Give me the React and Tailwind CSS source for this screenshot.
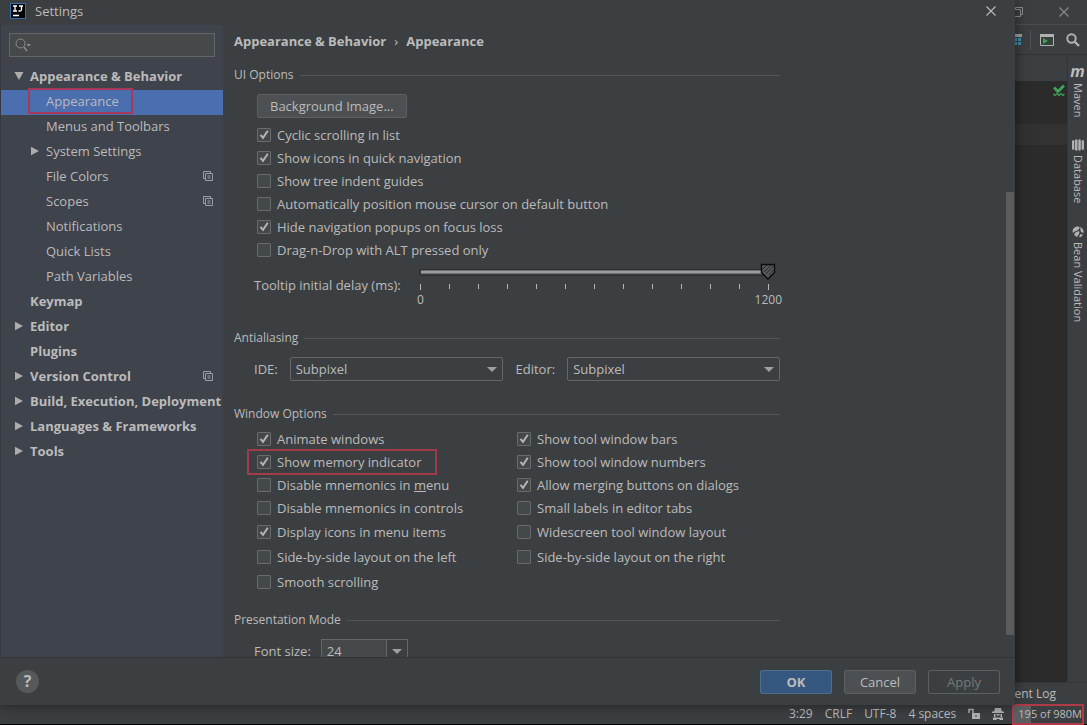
import React, { useState } from 'react';

const TREE = [
  { label: 'Appearance & Behavior', level: 0, arrow: 'down' },
  { label: 'Appearance', level: 1, selected: true },
  { label: 'Menus and Toolbars', level: 1 },
  { label: 'System Settings', level: 1, arrow: 'right' },
  { label: 'File Colors', level: 1, project: true },
  { label: 'Scopes', level: 1, project: true },
  { label: 'Notifications', level: 1 },
  { label: 'Quick Lists', level: 1 },
  { label: 'Path Variables', level: 1 },
  { label: 'Keymap', level: 0 },
  { label: 'Editor', level: 0, arrow: 'right' },
  { label: 'Plugins', level: 0 },
  { label: 'Version Control', level: 0, arrow: 'right', project: true },
  { label: 'Build, Execution, Deployment', level: 0, arrow: 'right' },
  { label: 'Languages & Frameworks', level: 0, arrow: 'right' },
  { label: 'Tools', level: 0, arrow: 'right' },
];

const UI_OPTIONS = [
  { label: 'Cyclic scrolling in list', on: true },
  { label: 'Show icons in quick navigation', on: true },
  { label: 'Show tree indent guides' },
  { label: 'Automatically position mouse cursor on default button' },
  { label: 'Hide navigation popups on focus loss', on: true },
  { label: 'Drag-n-Drop with ALT pressed only' },
];

const WINDOW_LEFT = [
  { label: 'Animate windows', on: true },
  { label: 'Show memory indicator', on: true, marked: true },
  { label: <>Disable mnemonics in <u>m</u>enu</> },
  { label: 'Disable mnemonics in controls' },
  { label: 'Display icons in menu items', on: true },
  { label: 'Side-by-side layout on the left' },
  { label: 'Smooth scrolling' },
];

const WINDOW_RIGHT = [
  { label: 'Show tool window bars', on: true },
  { label: 'Show tool window numbers', on: true },
  { label: 'Allow merging buttons on dialogs', on: true },
  { label: 'Small labels in editor tabs' },
  { label: 'Widescreen tool window layout' },
  { label: 'Side-by-side layout on the right' },
];

const TICKS = Array.from({ length: 13 }, (_, i) => i);

function Arrow({ dir }) {
  return (
    <svg className="w-2.5 h-2.5 shrink-0" viewBox="0 0 10 10" fill="#adadad" aria-hidden="true">
      {dir === 'down' ? <path d="M0.5 1h9L5 9z" /> : <path d="M1 0.8v8.4L9 5z" />}
    </svg>
  );
}

function ProjectIcon() {
  return (
    <svg className="w-[10px] h-[10px] shrink-0" viewBox="0 0 10 10" fill="none" stroke="#9a9da1" aria-hidden="true">
      <path d="M2.5 7.5h-2v-7h7v2" />
      <path d="M2.5 2.5h7v7h-7z" />
      <path d="M4.5 5h3M4.5 7h3" />
    </svg>
  );
}

function CloseIcon({ className }) {
  return (
    <svg className={`w-2.5 h-2.5 ${className}`} viewBox="0 0 10 10" fill="none" stroke="currentColor" strokeWidth="1.1" aria-hidden="true">
      <path d="M0.5 0.5l9 9M9.5 0.5l-9 9" />
    </svg>
  );
}

function CheckBox({ item }) {
  return (
    <label className="relative flex items-center gap-1.5 w-fit">
      <span className="grid w-3.5 h-3.5 shrink-0">
        <input
          type="checkbox"
          defaultChecked={item.on}
          className="peer col-start-1 row-start-1 appearance-none w-3.5 h-3.5 bg-[#43494a] border border-[#6b6b6b] rounded-[1px]"
        />
        <svg
          className="col-start-1 row-start-1 w-3.5 h-3.5 invisible peer-checked:visible pointer-events-none"
          viewBox="0 0 14 14"
          fill="none"
          stroke="#b4b4b4"
          strokeWidth="2"
          aria-hidden="true"
        >
          <path d="M3.500 6.800l2.500 3L10.800 2.800" />
        </svg>
      </span>
      <span className="whitespace-nowrap">{item.label}</span>
      {item.marked && (
        <span className="absolute -left-2.5 -right-4 -inset-y-[3px] border-2 border-[#a13a4b] pointer-events-none" />
      )}
    </label>
  );
}

function Title({ children, className }) {
  return (
    <div className={`flex items-center gap-1.5 h-5 text-[12px] ${className}`}>
      <h2 className="whitespace-nowrap">{children}</h2>
      <span className="grow h-px bg-[#53575a]" />
    </div>
  );
}

function Select({ id, label, value }) {
  return (
    <div className="flex items-center gap-3 grow">
      <label htmlFor={id}>{label}</label>
      <div className="relative grow">
        <select id={id} defaultValue={value} className="appearance-none block w-full h-6 pl-[5px] pr-6 bg-[#3c3f41] border border-[#646668] rounded-[2px]">
          <option>{value}</option>
        </select>
        <svg className="absolute right-1.5 top-2.5 w-2.5 h-[5px] pointer-events-none" viewBox="0 0 10 5" fill="#9da0a2" aria-hidden="true">
          <path d="M0 0h10L5 5z" />
        </svg>
      </div>
    </div>
  );
}

function DelaySlider() {
  const [delay, setDelay] = useState(1200);
  return (
    <div className="flex items-center h-[46px] mt-px">
      <label htmlFor="delay" className="w-[159px] shrink-0">Tooltip initial delay (ms):</label>
      <div className="relative grow h-[46px] text-[12px]">
        <svg className="w-[366px] h-7" viewBox="0 0 366 28" fill="none" aria-hidden="true">
          <path d="M7 7.5h348" stroke="#2b2d2e" />
          <path d="M7 8v6" stroke="#2b2d2e" />
          <path d="M8 10h347" stroke="#9b9ea0" strokeWidth="3" />
          <path d="M8 13.5h347" stroke="#2b2d2e" />
          {TICKS.map((i) => (
            <path key={i} d={`M${7.5 + i * 29} 22v${i % 12 ? 5 : 6}`} stroke="#b4b6b7" />
          ))}
          <g transform={`translate(${(delay - 1200) * 0.29} 0)`}>
            <path d="M348.5 2.5h13v8l-6.500 6.500l-6.500-6.500z" fill="#55595b" stroke="#0c0c0c" strokeWidth="1.5" />
            <path d="M350 7l4-4M351 10l7-7M353 12l7-8M356 13l4-5" stroke="#1d1f20" strokeWidth="0.8" />
          </g>
        </svg>
        <input
          id="delay"
          type="range"
          min="0"
          max="1200"
          value={delay}
          onChange={(e) => setDelay(Number(e.target.value))}
          className="absolute inset-x-0 top-0 h-5 opacity-0"
        />
        <div className="flex justify-between pl-1 -mr-0.5 leading-5">
          <span>0</span>
          <span>1200</span>
        </div>
      </div>
    </div>
  );
}

function Sidebar() {
  return (
    <aside className="w-[223px] shrink-0 bg-[#3f434c] border-l border-[#35383c] pt-2">
      <div className="relative ml-2 mr-2">
        <input
          type="text"
          aria-label="Search settings"
          className="block w-full h-6 pl-7 bg-[#45494a] border border-[#646668] outline-none"
        />
        <svg className="absolute left-1.5 top-1 w-4 h-4" viewBox="0 0 16 16" fill="none" stroke="#8b8e90" aria-hidden="true">
          <circle cx="5.500" cy="6.500" r="4.500" />
          <path d="M9 10l3 4" strokeWidth="1.4" />
          <path d="M11.500 7h4.500l-2.250 2.500z" fill="#8b8e90" stroke="none" />
        </svg>
      </div>
      <ul className="mt-2">
        {TREE.map((item) => (
          <li
            key={item.label}
            className={`flex items-center h-[25px] pb-[3px] pr-2.5 ${item.level ? 'pl-[29px]' : 'pl-[13px] font-bold'} ${item.selected ? 'bg-[#4b6eaf]' : ''}`}
          >
            <span className="w-4 shrink-0">{item.arrow && <Arrow dir={item.arrow} />}</span>
            <span className="relative grow whitespace-nowrap">
              {item.label}
              {item.selected && (
                <span className="absolute -left-[18px] -inset-y-[3px] w-[105px] border-2 border-[#a8395a] pointer-events-none" />
              )}
            </span>
            {item.project && <ProjectIcon />}
          </li>
        ))}
      </ul>
    </aside>
  );
}

function Content() {
  return (
    <main className="relative grow overflow-hidden pl-[11px]">
      <div className="w-[546px]">
        <div className="flex items-center h-8 font-bold">
          <span>Appearance &amp; Behavior</span>
          <span className="w-5 text-center font-normal">›</span>
          <h1>Appearance</h1>
        </div>

        <Title className="mt-2">UI Options</Title>
        <div className="pl-[23px]">
          <button className="block mt-[9px] mb-[5px] h-6 px-3 bg-[#4c5052] border border-[#5e6060] rounded-[2px]">
            Background Image...
          </button>
          <div className="grid auto-rows-[23px] items-center">
            {UI_OPTIONS.map((item) => (
              <CheckBox key={item.label} item={item} />
            ))}
          </div>
        </div>
        <div className="pl-5">
          <DelaySlider />
        </div>

        <Title className="mt-5">Antialiasing</Title>
        <div className="flex gap-[13px] mt-[9px] pl-5">
          <Select id="ide" label="IDE:" value="Subpixel" />
          <Select id="editor" label="Editor:" value="Subpixel" />
        </div>

        <Title className="mt-[23px]">Window Options</Title>
        <div className="flex mt-[3px] pl-[23px]">
          {[WINDOW_LEFT, WINDOW_RIGHT].map((column, i) => (
            <div key={i} className="grid grid-rows-[repeat(4,23px)_repeat(3,25px)] items-center w-[260px]">
              {column.map((item, j) => (
                <CheckBox key={j} item={item} />
              ))}
            </div>
          ))}
        </div>

        <Title className="mt-4">Presentation Mode</Title>
        <div className="flex items-center gap-2.5 mt-[9px] pl-5">
          <label htmlFor="font-size" className="leading-3">Font size:</label>
          <div className="flex h-6 border border-[#646668]">
            <input id="font-size" type="text" defaultValue="24" className="w-16 pl-[5px] bg-[#45494a] outline-none" />
            <button aria-label="Choose font size" className="flex items-center justify-center w-[21px] border-l border-[#646668]">
              <svg className="w-2.5 h-[5px]" viewBox="0 0 10 5" fill="#9da0a2" aria-hidden="true">
                <path d="M0 0h10L5 5z" />
              </svg>
            </button>
          </div>
        </div>
      </div>
      {/* Scroll thumb */}
      <span className="absolute right-px top-[167px] bottom-[22px] w-2 bg-[#595b5d]" />
    </main>
  );
}

function SettingsDialog() {
  return (
    <div className="absolute left-0 top-0 right-[72px] bottom-5 flex flex-col bg-[#3c3f41] shadow-[0_0_12px_rgba(0,0,0,0.5)]">
      <header className="flex items-center h-[25px] shrink-0 pb-[3px] pl-2.5 pr-[19px]">
        <svg className="w-4 h-4" viewBox="0 0 16 16" aria-hidden="true">
          <path d="M0 0h16v16H0z" fill="#2f6fae" />
          <path d="M1 1h14v14H1z" fill="#05060a" />
          <path d="M3 3h4M5 3v5M3 8h4M9 3h4M11.500 3v3.500q0 1.500-1.500 1.500h-1.500M3 12.500h6" stroke="#ffffff" strokeWidth="1.3" fill="none" />
        </svg>
        <span className="grow ml-[9px]">Settings</span>
        <button aria-label="Close settings">
          <CloseIcon className="text-[#bbbbbb]" />
        </button>
      </header>
      <div className="flex grow min-h-0">
        <Sidebar />
        <Content />
      </div>
      <footer className="flex items-center justify-between h-12 shrink-0 pl-4 pr-[15px] border-t border-[#323537]">
        <button aria-label="Help" className="w-[23px] h-[23px] rounded-full bg-[#55595b] text-[16px] leading-[23px] font-bold">?</button>
        <div className="flex gap-3">
          <button className="w-[72px] h-6 bg-[#365880] border border-[#4c708c] rounded-[2px] font-bold">OK</button>
          <button className="w-[72px] h-6 bg-[#4c5052] border border-[#5e6060] rounded-[2px]">Cancel</button>
          <button disabled className="w-[72px] h-6 border border-[#5e6060] rounded-[2px] text-[#777777]">Apply</button>
        </div>
      </footer>
    </div>
  );
}

function ToolStripe() {
  return (
    <nav className="flex flex-col items-center w-5 shrink-0 pt-2 border-l border-[#343638] bg-[#3c3f41] text-[11px]">
      <span className="h-4 leading-4 text-[16px] italic font-bold" aria-hidden="true">m</span>
      <button className="[writing-mode:vertical-rl] mt-1">Maven</button>
      <svg className="w-3 h-3 mt-[22px]" viewBox="0 0 12 12" fill="#afb1b3" aria-hidden="true">
        <path d="M0 2q1.500-2 2.300 0v8q-.8 2-2.300 0zM3 1q1.300-1.500 2.500 0v10q-1.200 1.500-2.500 0zM6.300 1q1.300-1.500 2.500 0v10q-1.200 1.500-2.500 0zM9.600 2q1.600-2 2.400 0v8q-.8 2-2.400 0z" />
      </svg>
      <button className="[writing-mode:vertical-rl] mt-1">Database</button>
      <svg className="w-3 h-3 mt-[22px]" viewBox="0 0 12 12" fill="#afb1b3" aria-hidden="true">
        <path d="M1 7C-.5 3 3 .2 6.500.5 8 .8 8 2 6.500 3.500 5 5 3 5 1 7zM8 1c3 1 4 4 3.500 6L9 6C8 4.500 9 3 8 1zM2 8.500C4 5.500 5 6 7 5c1 2 0 3-1 4.500L4.500 11zM7 11l1.500-3 2.500.5C10 10.500 8.500 11.500 7 11z" />
      </svg>
      <button className="[writing-mode:vertical-rl] mt-1 whitespace-nowrap">Bean Validation</button>
    </nav>
  );
}

function IdeWindow() {
  return (
    <div className="flex flex-col h-full bg-[#3c3f41]">
      <div className="flex items-center justify-end gap-9 h-[25px] shrink-0 pr-[18px] border-b border-[#4a4d4f] text-[#8b8e90]">
        <svg className="w-2.5 h-2.5" viewBox="0 0 10 10" fill="none" stroke="currentColor" aria-hidden="true">
          <path d="M0.500 2.500h7v7h-7zM2.500 2.500v-2h7v7h-2" />
        </svg>
        <button aria-label="Close window">
          <CloseIcon />
        </button>
      </div>
      <div className="flex items-center justify-end h-[30px] shrink-0 pr-[7px] border-b border-[#323436]">
        <svg className="w-3 h-3" viewBox="0 0 12 12" fill="#3e8fb0" aria-hidden="true">
          <path d="M0 0h12v3H0z" fill="#9aa0a3" />
          <path d="M0 4h3v3H0zM4 4h3v3H4zM8 4h3v3H8zM4 8h3v3H4zM8 8h3v3H8z" />
        </svg>
        <span className="w-px h-5 ml-2 mr-[9px] bg-[#515456]" />
        <svg className="w-3.5 h-3" viewBox="0 0 14 12" fill="none" aria-hidden="true">
          <path d="M.5.5h13v11H.5z" fill="#35443a" stroke="#afb1b3" />
          <path d="M0 0h14v3H0z" fill="#afb1b3" />
          <path d="M3 4v6l5-3z" fill="#499c54" />
        </svg>
        <svg className="w-3.5 h-3.5 ml-3" viewBox="0 0 14 14" fill="none" stroke="#afb1b3" strokeWidth="2" aria-hidden="true">
          <circle cx="5.500" cy="5.500" r="4.200" />
          <path d="M8.500 8.500l4.500 4.500" strokeWidth="2.400" />
        </svg>
      </div>
      <div className="flex grow min-h-0">
        <div className="flex flex-col grow">
          <div className="h-[26px] shrink-0" />
          <div className="grow bg-[#2b2b2b]">
            <div className="flex justify-end h-[43px] pt-[3px] pr-0.5">
              <svg className="w-3 h-3" viewBox="0 0 12 12" fill="none" stroke="#3fa35a" aria-hidden="true">
                <path d="M1 3.500l4 4L11 1.500" strokeWidth="2.800" />
                <path d="M0 10l2 1.500 2-2 2 2 2-2 2 2 1.500-1.500" strokeWidth="1.200" />
              </svg>
            </div>
            <div className="h-[21px] bg-[#323232]" />
          </div>
        </div>
        <ToolStripe />
      </div>
      <div className="flex items-center justify-end h-[22px] shrink-0 pr-[31px] border-t border-[#343638] text-[12px]">
        <button>Event Log</button>
      </div>
      <div className="flex items-center justify-end h-[21px] shrink-0 border-b border-black text-[12px]">
        <div className="flex items-center gap-3 pr-2">
          <span>3:29</span>
          <span>CRLF</span>
          <span>UTF-8</span>
          <span>4 spaces</span>
          <svg className="w-3 h-3" viewBox="0 0 12 12" fill="none" aria-hidden="true">
            <path d="M1 5V1.500h4V6" stroke="#afb1b3" strokeWidth="1.500" />
            <path d="M4 5h8v6H4z" fill="#afb1b3" />
            <path d="M7.500 7h1v2h-1z" fill="#3c3f41" />
          </svg>
          <svg className="w-3 h-3" viewBox="0 0 12 12" fill="#afb1b3" aria-hidden="true">
            <path d="M3 0h6l1 3.500h2V5H0V3.500h2zM2 6h1.500v3H2zM8.500 6H10v3H8.500zM4.500 6h3v1.500h-3zM1 9.500h10V12H8l-1-1H5l-1 1H1z" />
          </svg>
        </div>
        <div className="flex items-center h-[21px] pl-1 mr-[3px] border-2 border-[#b03a48] bg-linear-to-r from-[#5c5f60] from-25% to-[#3c3f41] to-25% text-[11px]">
          195 of 980M
        </div>
      </div>
    </div>
  );
}

export default function App() {
  return (
    <div className="relative h-screen overflow-hidden font-['Open_Sans','Noto_Sans',sans-serif] text-[13px] leading-5 text-[#bbbbbb]">
      <IdeWindow />
      <SettingsDialog />
    </div>
  );
}
